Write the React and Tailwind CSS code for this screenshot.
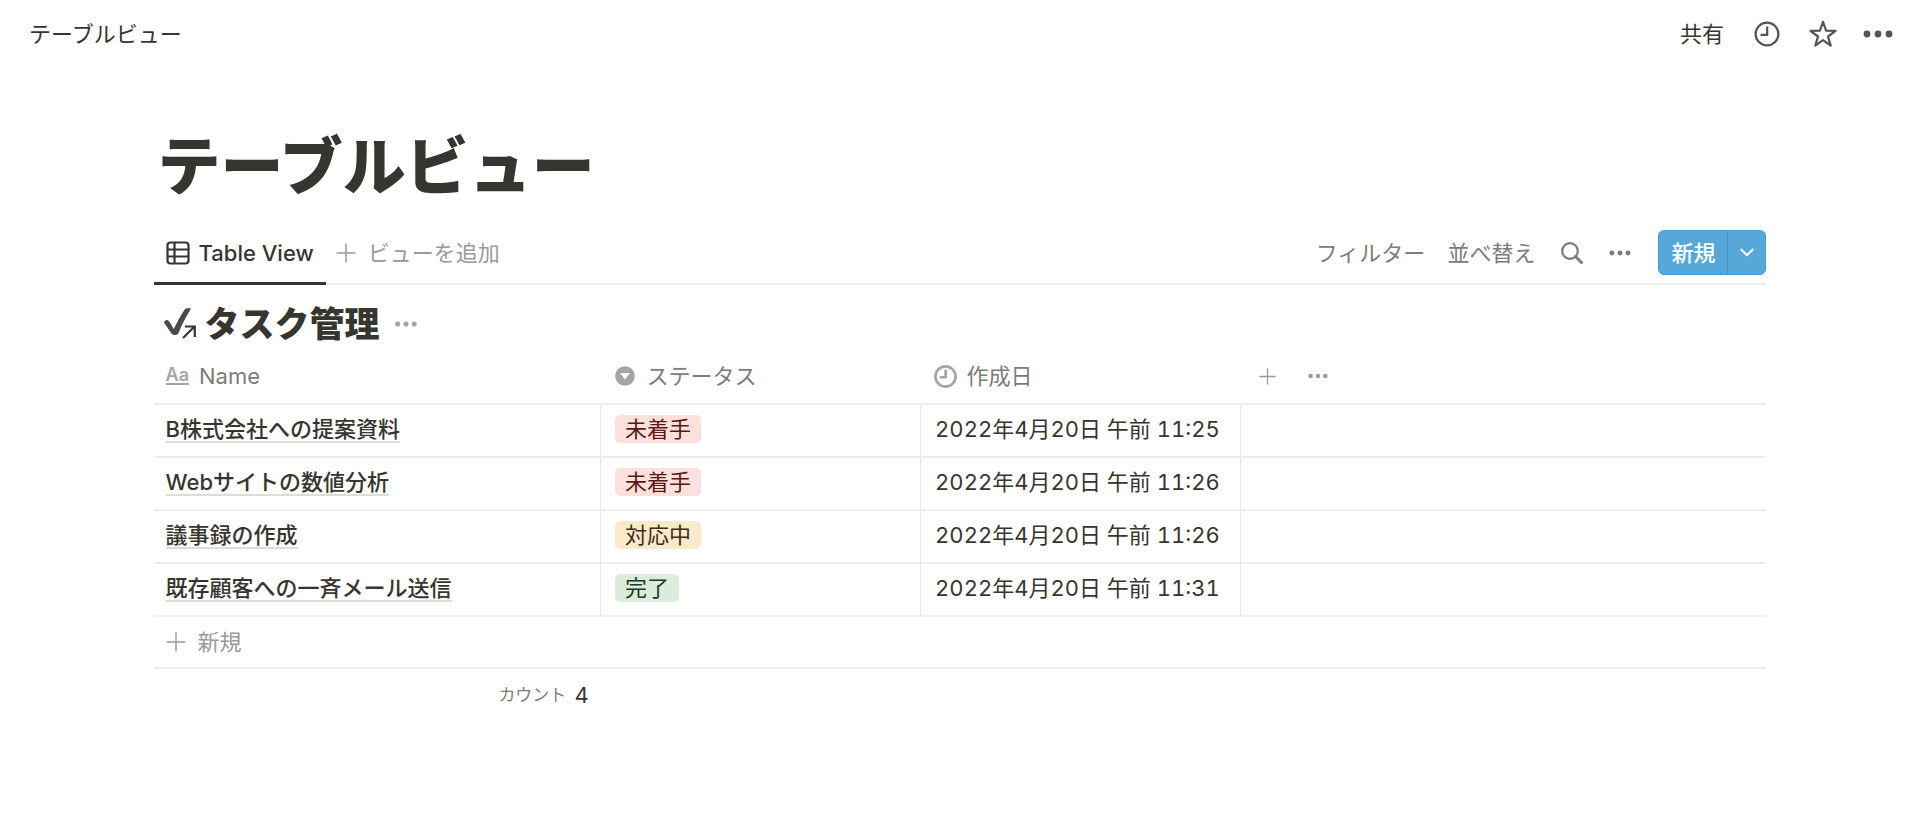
const FONT = "font-['Inter','Noto_Sans_CJK_JP',sans-serif]";

function Dots({ className }) {
  return (
    <svg viewBox="0 0 30 8" className={className} fill="currentColor" aria-hidden="true">
      <circle cx="4" cy="4" r="3.4" />
      <circle cx="15" cy="4" r="3.4" />
      <circle cx="26" cy="4" r="3.4" />
    </svg>
  );
}

function Plus({ className }) {
  return (
    <svg viewBox="0 0 20 20" className={className} fill="none" stroke="currentColor" strokeWidth="1.5" aria-hidden="true">
      <path d="M10 0.5V19.5M0.5 10H19.5" />
    </svg>
  );
}

function Clock({ className, strokeWidth }) {
  return (
    <svg viewBox="0 0 26 26" className={className} fill="none" stroke="currentColor" strokeWidth={strokeWidth} aria-hidden="true">
      <circle cx="13" cy="13" r="11.4" />
      <path d="M13.2 5.5V13.8H6.5" />
    </svg>
  );
}

function Star({ className }) {
  return (
    <svg viewBox="0 0 28 28" className={className} fill="none" stroke="currentColor" strokeWidth="2.2" strokeLinejoin="round" aria-hidden="true">
      <path d="M14 1.8L17.1 10.6L26.5 10.8L19 16.5L21.7 25.6L14 20.2L6.3 25.6L9 16.5L1.5 10.8L10.9 10.6Z" />
    </svg>
  );
}

function TableIcon({ className }) {
  return (
    <svg viewBox="0 0 24 24" className={className} fill="none" stroke="currentColor" strokeWidth="2.2" aria-hidden="true">
      <rect x="1.5" y="1.5" width="21" height="21" rx="3" />
      <path d="M1.5 8.5H22.5M1.5 15.5H22.5M8.5 1.5V22.5" />
    </svg>
  );
}

function CheckLink({ className }) {
  return (
    <svg viewBox="0 0 34 34" className={className} fill="none" aria-hidden="true">
      <path d="M1 15.4C1 14 3.4 12.6 4.8 13.2C6.6 14 8.6 18.4 10.8 22C14 15.4 18 7.4 21.8 2.4C22.8 1.2 26.4 1 28 1.8C23.4 9 18.6 18.4 15.4 26.2C14.6 28 10.6 28.6 9.2 27.2C6.8 24.6 3.6 18.8 1 15.4Z" fill="#4a4a4c" />
      <path d="M20 30.5L31 19.5M23 19.5H31.5V29" stroke="#fff" strokeWidth="5.5" />
      <path d="M20 31L31.5 19.5M22 19.5H31.8V30" stroke="#37352f" strokeWidth="2.2" />
    </svg>
  );
}

function Search({ className }) {
  return (
    <svg viewBox="0 0 22 22" className={className} fill="none" stroke="currentColor" aria-hidden="true">
      <circle cx="9" cy="9" r="7.8" strokeWidth="2.2" />
      <path d="M14.5 14.5L20.5 20.5" strokeWidth="3" strokeLinecap="round" />
    </svg>
  );
}

function Chevron({ className }) {
  return (
    <svg viewBox="0 0 14 9" className={className} fill="none" stroke="currentColor" strokeWidth="2" aria-hidden="true">
      <path d="M0.8 1L7 7.2L13.2 1" />
    </svg>
  );
}

function SelectIcon({ className }) {
  return (
    <svg viewBox="0 0 20 20" className={className} aria-hidden="true">
      <circle cx="10" cy="10" r="9.8" fill="currentColor" />
      <path d="M5 7H15L10 13.5Z" fill="#fff" />
    </svg>
  );
}

const TAGS = {
  未着手: "bg-[#fbe1de] text-[#5d1715]",
  対応中: "bg-[#fbeaca] text-[#402c1b]",
  完了: "bg-[#daecdb] text-[#1c3829]",
};

const ROWS = [
  { name: "B株式会社への提案資料", status: "未着手", date: "2022年4月20日 午前 11:25" },
  { name: "Webサイトの数値分析", status: "未着手", date: "2022年4月20日 午前 11:26" },
  { name: "議事録の作成", status: "対応中", date: "2022年4月20日 午前 11:26" },
  { name: "既存顧客への一斉メール送信", status: "完了", date: "2022年4月20日 午前 11:31" },
];

export default function App() {
  return (
    <div className={`min-h-screen bg-white text-[22px] leading-8 text-[#37352f] ${FONT}`} lang="ja">
      <header className="flex h-[68px] items-center justify-between pl-[29px] pr-[27px]">
        <a href="#page">テーブルビュー</a>
        <div className="flex items-center text-[#555453]">
          <button type="button" className="mr-[30px] text-[#37352f]">共有</button>
          <button type="button" aria-label="更新履歴" className="mr-[29px]"><Clock className="size-[26px]" strokeWidth="2.2" /></button>
          <button type="button" aria-label="お気に入り" className="mr-[26px]"><Star className="size-7" /></button>
          <button type="button" aria-label="メニュー"><Dots className="h-2 w-[30px]" /></button>
        </div>
      </header>

      <main id="page" className="px-[8%]">
        <h1 className="pt-[52px] pl-1 text-[63px] font-black leading-[92px]">テーブルビュー</h1>

        <div className="mt-[14px] flex h-[59px] items-stretch justify-between border-b-2 border-[#ededec]">
          <div className="flex">
            <button type="button" className="-mb-[2px] flex items-center gap-[9px] border-b-[3px] border-[#37352f] px-3 pb-[3px] font-medium">
              <TableIcon className="size-6" />
              Table View
            </button>
            <button type="button" className="flex items-center gap-3 px-[10px] pb-1 text-[#9b9a97]">
              <Plus className="size-5" />
              ビューを追加
            </button>
          </div>
          <div className="flex items-center pb-1 text-[#7d7c78]">
            <button type="button" className="mr-[22px]">フィルター</button>
            <button type="button" className="mr-[26px]">並べ替え</button>
            <button type="button" aria-label="検索" className="mr-[26px]"><Search className="size-[22px]" /></button>
            <button type="button" aria-label="その他" className="mr-[27px]"><Dots className="h-[6px] w-[22px]" /></button>
            <div className="flex h-[45px] rounded-md border border-[#4c9cc9] bg-[#56a8d9] text-white">
              <button type="button" className="border-r border-[#4590bd] px-3 font-medium">新規</button>
              <button type="button" aria-label="テンプレート" className="flex w-[37px] items-center justify-center"><Chevron className="h-[9px] w-[14px]" /></button>
            </div>
          </div>
        </div>

        <div className="flex h-[69px] items-center pt-2 pl-[9px]">
          <CheckLink className="mr-2 size-[34px]" />
          <h2 className="text-[35px] font-black leading-10">タスク管理</h2>
          <button type="button" aria-label="データベースメニュー" className="ml-[14px] text-[#a5a4a1]"><Dots className="h-[6px] w-6" /></button>
        </div>

        <table className="w-full table-fixed border-collapse text-left">
          <colgroup>
            <col className="w-[447px]" />
            <col className="w-[320px]" />
            <col className="w-[320px]" />
            <col />
          </colgroup>
          <thead>
            <tr className="h-[50px] border-b-2 border-[#ededec] text-[#7d7c78]">
              <th className="px-3 pb-[5px] font-normal">
                <span className="flex items-center gap-[10px]">
                  <span aria-hidden="true" className="border-b-2 border-[#a5a4a1] text-lg font-semibold leading-4 text-[#a5a4a1]">Aa</span>
                  Name
                </span>
              </th>
              <th className="px-[14px] pb-[5px] font-normal">
                <span className="flex items-center gap-3">
                  <SelectIcon className="size-5 text-[#a5a4a1]" />
                  ステータス
                </span>
              </th>
              <th className="px-[13px] pb-[5px] font-normal">
                <span className="flex items-center gap-[10px]">
                  <Clock className="size-[23px] text-[#a5a4a1]" strokeWidth="3" />
                  作成日
                </span>
              </th>
              <th className="px-[18px] pb-[5px] font-normal">
                <span className="flex items-center gap-8 text-[#9b9a97]">
                  <button type="button" aria-label="プロパティを追加"><Plus className="size-[17px]" /></button>
                  <button type="button" aria-label="プロパティ"><Dots className="h-[6px] w-5" /></button>
                </span>
              </th>
            </tr>
          </thead>
          <tbody>
            {ROWS.map((row) => (
              <tr key={row.name} className="h-[53px] border-b-2 border-[#ededec]">
                <td className="border-r border-[#e6e6e5] px-3 pb-1">
                  <a href="#page" className="inline-block border-b-2 border-[#dcdcda] font-medium leading-6">{row.name}</a>
                </td>
                <td className="border-r border-[#e6e6e5] px-[14px] pb-1">
                  <span className={`block w-fit rounded-[5px] px-[10px] leading-7 ${TAGS[row.status]}`}>{row.status}</span>
                </td>
                <td className="whitespace-nowrap border-r border-[#e6e6e5] px-[14px] pb-1 tabular-nums">{row.date}</td>
                <td />
              </tr>
            ))}
          </tbody>
        </table>

        <button type="button" className="flex h-[52px] w-full items-center gap-3 border-b-2 border-[#ededec] px-3 text-[#9b9a97]">
          <Plus className="size-5" />
          新規
        </button>
        <div className="flex h-[52px] w-[447px] max-w-full items-center justify-end gap-2 px-3">
          <span className="text-[17px] text-[#7d7c78]">カウント</span>
          <span>4</span>
        </div>
      </main>
    </div>
  );
}
